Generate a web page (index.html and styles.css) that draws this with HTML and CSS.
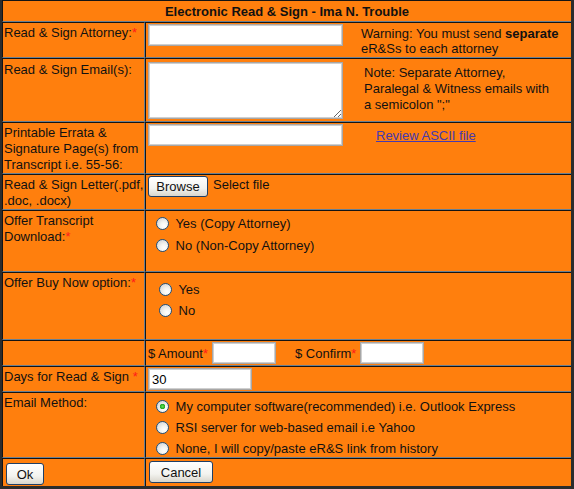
FILE: index.html
```html
<!DOCTYPE html>
<html lang="en">
<head>
    <meta charset="UTF-8">
    <title>Electronic Read &amp; Sign</title>
    <link rel="stylesheet" href="styles.css">
</head>
<body>
    <form class="sheet">
        <!-- Title bar -->
        <div class="cell title">Electronic Read &amp; Sign - Ima N. Trouble</div>

        <!-- Attorney -->
        <div class="cell label">Read &amp; Sign Attorney:<span class="req">*</span></div>
        <div class="cell field row-attorney">
            <input type="text" class="text wide">
            <div class="note warn">Warning: You must send <b>separate</b> eR&amp;Ss to each attorney</div>
        </div>

        <!-- Emails -->
        <div class="cell label label-email">Read &amp; Sign Email(s):</div>
        <div class="cell field row-email">
            <textarea class="text wide area"></textarea>
            <div class="note emails">Note: Separate Attorney, Paralegal &amp; Witness emails with a semicolon ";"</div>
        </div>

        <!-- Errata pages -->
        <div class="cell label">Printable Errata &amp; Signature Page(s) from Transcript i.e. 55-56:</div>
        <div class="cell field row-errata">
            <input type="text" class="text wide">
            <a href="#" class="review">Review ASCII file</a>
        </div>

        <!-- Letter upload -->
        <div class="cell label">Read &amp; Sign Letter(.pdf, .doc, .docx)</div>
        <div class="cell field row-letter">
            <button type="button" class="btn browse">Browse</button>
            <span class="file-name">Select file</span>
        </div>

        <!-- Transcript download -->
        <div class="cell label">Offer Transcript <span class="line">Download:<span class="req">*</span></span></div>
        <div class="cell field options opts-transcript">
            <label class="option"><input type="radio" name="download"> Yes (Copy Attorney)</label>
            <label class="option"><input type="radio" name="download"> No (Non-Copy Attorney)</label>
        </div>

        <!-- Buy now -->
        <div class="cell label">Offer Buy Now option:<span class="req">*</span></div>
        <div class="cell field options opts-buy">
            <label class="option"><input type="radio" name="buynow"> Yes</label>
            <label class="option"><input type="radio" name="buynow"> No</label>
        </div>

        <!-- Amount -->
        <div class="cell label"></div>
        <div class="cell field row-amount">
            <span class="amount-label">$ Amount<span class="req">*</span></span>
            <input type="text" class="text money">
            <span class="amount-label confirm">$ Confirm<span class="req">*</span></span>
            <input type="text" class="text money">
        </div>

        <!-- Days -->
        <div class="cell label">Days for Read &amp; Sign <span class="req">*</span></div>
        <div class="cell field row-days">
            <input type="text" class="text days" value="30">
        </div>

        <!-- Email method -->
        <div class="cell label">Email Method:</div>
        <div class="cell field options opts-method">
            <label class="option"><input type="radio" name="method" checked> My computer software(recommended) i.e. Outlook Express</label>
            <label class="option"><input type="radio" name="method"> RSI server for web-based email i.e Yahoo</label>
            <label class="option"><input type="radio" name="method"> None, I will copy/paste eR&amp;S link from history</label>
        </div>

        <!-- Actions -->
        <div class="cell label last">
            <button type="button" class="btn ok">Ok</button>
        </div>
        <div class="cell field last">
            <button type="button" class="btn cancel">Cancel</button>
        </div>
    </form>
</body>
</html>
```

FILE: styles.css
```css
* {
    margin: 0;
    padding: 0;
    box-sizing: border-box;
}

body {
    background-color: #2c2c2c;
    padding: 0 3px 3px 2px;
    font-family: "Liberation Sans", Arial, sans-serif;
    font-size: 13px;
    line-height: 16px;
    color: #111;
}

.sheet {
    display: grid;
    grid-template-columns: 143px 426px;
    grid-template-rows: 22px 36px 64px 52px 36px 62px 68px 26px 26px 66px 28px;
    background-color: #ff7f0d;
}

.cell {
    border-top: 1px solid #141414;
    border-left: 1px solid #141414;
    border-bottom: 1px solid #6a7f90;
}

.cell.last {
    border-bottom: none;
}

.title {
    grid-column: 1 / 3;
    text-align: center;
    font-weight: bold;
    padding-top: 3px;
}

.label {
    border-right: 1px solid #6a7f90;
    padding: 2px 0 0 1px;
}

.label .line {
    display: block;
}

.label-email {
    padding-top: 3px;
}

.req {
    color: #ff1a1a;
}

.field {
    display: flex;
    align-items: flex-start;
    padding-left: 2px;
}

/* text boxes */
.text {
    height: 22px;
    border: 1px solid #a7a7a7;
    box-shadow: inset 0 0 0 1px #cfcfcf;
    background-color: #fff;
    font-family: "Liberation Sans", Arial, sans-serif;
    font-size: 13px;
    padding: 0 3px;
    outline: none;
}

.wide {
    width: 195px;
}

.area {
    height: 57px;
    resize: both;
}

.money {
    width: 64px;
}

.days {
    width: 104px;
}

.row-attorney,
.row-errata,
.row-letter,
.row-amount,
.row-days {
    padding-top: 1px;
}

.row-email {
    padding-top: 3px;
}

.note.warn {
    width: 206px;
    margin: 2px 0 0 18px;
    line-height: 15px;
}

.note.emails {
    width: 195px;
    margin: 3px 0 0 21px;
}

.review {
    margin: 4px 0 0 33px;
    color: #463ab0;
}

.file-name {
    margin: 1px 0 0 5px;
}

.amount-label {
    margin-top: 4px;
}

.amount-label.confirm {
    margin-left: 19px;
}

.row-amount .money {
    margin-left: 4px;
}

/* radio groups */
.options {
    flex-direction: column;
}

.option {
    display: flex;
    align-items: flex-start;
    white-space: pre;
}

.option input {
    appearance: none;
    -webkit-appearance: none;
    width: 13px;
    height: 13px;
    margin: 1px 3px 0 8px;
    border: 1px solid #1c5180;
    border-radius: 50%;
    background: radial-gradient(circle at 65% 70%, #ffffff 0, #f4f4f0 35%, #c9cbd0 100%);
}

.option input:checked {
    background: radial-gradient(circle at 50% 50%, #5fe05c 0, #22a51f 2.5px, transparent 3px),
                radial-gradient(circle at 65% 70%, #ffffff 0, #f4f4f0 35%, #c9cbd0 100%);
}

.opts-transcript {
    padding-top: 5px;
    gap: 6px;
}

.opts-buy {
    padding-top: 9px;
    gap: 5px;
}

.opts-buy .option input {
    margin-left: 11px;
}

.opts-method {
    padding-top: 6px;
    gap: 5px;
}

/* buttons */
.btn {
    height: 22px;
    border: 1px solid #1f3f66;
    border-radius: 3px;
    background: linear-gradient(#ffffff, #f3f3ef 60%, #d9d6cc);
    font-family: "Liberation Sans", Arial, sans-serif;
    font-size: 13px;
    color: #111;
    cursor: pointer;
}

.browse {
    width: 60px;
    height: 21px;
}

.ok {
    width: 38px;
    margin: 2px 0 0 2px;
}

.cancel {
    width: 64px;
    margin: 2px 0 0 1px;
}
```
